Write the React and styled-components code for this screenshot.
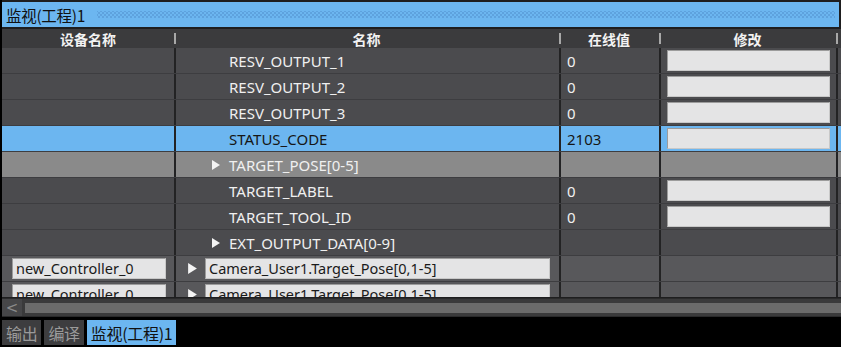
import React from "react";
import styled, { createGlobalStyle } from "styled-components";

const Global = createGlobalStyle`
  html, body { margin: 0; padding: 0; background: #000; }
  body { font-family: "Noto Sans", "Noto Sans CJK SC", sans-serif; }
`;

const Screen = styled.div`
  width: 841px;
  height: 347px;
  background: #000;
  display: flex;
  flex-direction: column;
  overflow: hidden;
`;

const Panel = styled.div`
  margin-left: 2px;
  padding-top: 2px;
  background: #1e1e1f;
  display: flex;
  flex-direction: column;
`;

const TitleBar = styled.div`
  height: 25px;
  margin-right: 2px;
  background: #6cb6f0;
  display: flex;
  align-items: center;
  padding-left: 4px;
  gap: 12px;
`;

const TitleText = styled.span`
  font-family: "Noto Sans CJK SC", sans-serif;
  font-size: 15.5px;
  color: #111;
  letter-spacing: -0.3px;
`;

const Dots = styled.div`
  flex: 1;
  height: 7px;
  margin-right: 4px;
  background-image:
    radial-gradient(circle, #5ea2de 0.8px, transparent 1px),
    radial-gradient(circle, #5ea2de 0.8px, transparent 1px);
  background-size: 4px 4px;
  background-position: 0 0, 2px 2px;
`;

const Gap = styled.div`
  height: 2px;
  background: #1e1e1f;
`;

const columns = "172px 385px 100px 177px 1fr";

const Header = styled.div`
  display: grid;
  grid-template-columns: ${columns};
  height: 19px;
  background: #3b3b3d;
`;

const HeadCell = styled.div`
  position: relative;
  display: flex;
  align-items: center;
  justify-content: center;
  font-family: "Noto Sans CJK SC", sans-serif;
  font-weight: 700;
  font-size: 14px;
  color: #f2f2f2;
  &::before {
    content: "";
    display: ${(p) => (p.$first ? "none" : "block")};
    position: absolute;
    left: 0;
    top: 4px;
    width: 2px;
    height: 11px;
    background: #a8a8a8;
  }
`;

const Body = styled.div`
  height: 249px;
  overflow: hidden;
  display: flex;
  flex-direction: column;
`;

const rowBg = {
  normal: "#4b4b4e",
  selected: "#6cb6f0",
  group: "#8a8a8a",
  light: "#58585b",
};

const Row = styled.div`
  display: grid;
  grid-template-columns: ${columns};
  height: 26px;
  flex-shrink: 0;
  box-sizing: border-box;
  border-bottom: 1px solid #3d3d40;
  background: ${(p) => rowBg[p.$kind]};
  color: ${(p) => (p.$kind === "selected" ? "#161616" : "#f0f0f0")};
`;

const Cell = styled.div`
  display: flex;
  align-items: center;
  box-sizing: border-box;
  border-left: ${(p) => (p.$first ? "none" : "2px solid #232324")};
  padding-left: ${(p) => p.$pl || 0}px;
  padding-right: ${(p) => p.$pr || 0}px;
  font-size: 15px;
  gap: ${(p) => p.$gap || 0}px;
  white-space: nowrap;
  overflow: hidden;
`;

const Field = styled.div`
  flex: 1;
  height: 21px;
  box-sizing: border-box;
  margin-top: -1px;
  background: #e4e4e5;
  border: 1px solid #9c9c9c;
  border-right-color: #c8c8c8;
  border-bottom-color: #c8c8c8;
  color: #1a1a1a;
  font-size: 14.5px;
  display: flex;
  align-items: center;
  padding-left: 3px;
  white-space: nowrap;
  overflow: hidden;
`;

const Arrow = ({ size = 9 }) => (
  <svg width={size - 1} height={size + 1} viewBox="0 0 8 10" style={{ flexShrink: 0 }}>
    <polygon points="0,0 8,5 0,10" fill="#f4f4f4" />
  </svg>
);

const ScrollBar = styled.div`
  height: 17px;
  margin-top: 1px;
  background: #3a3a3b;
  border-top: 1px solid #2a2a2b;
  border-bottom: 1px solid #2a2a2b;
  display: flex;
  align-items: center;
`;

const ScrollBtn = styled.div`
  width: 20px;
  height: 17px;
  background: #464648;
  color: #8a8a8a;
  font-size: 15px;
  display: flex;
  align-items: center;
  justify-content: center;
  font-family: "DejaVu Sans", sans-serif;
`;

const Thumb = styled.div`
  flex: 1;
  height: 10px;
  margin-left: 3px;
  background: #6b6b6b;
`;

const Tabs = styled.div`
  display: flex;
  gap: 3px;
  margin-top: 3px;
  margin-left: 2px;
  height: 25px;
`;

const Tab = styled.div`
  display: flex;
  align-items: center;
  padding: 0 4px;
  font-family: "Noto Sans CJK SC", sans-serif;
  font-size: 16px;
  letter-spacing: -0.3px;
  background: ${(p) => (p.$active ? "#6cb6f0" : "#3d3d3f")};
  color: ${(p) => (p.$active ? "#111" : "#9a9a9a")};
`;

const rows = [
  { name: "RESV_OUTPUT_1", value: "0", edit: true },
  { name: "RESV_OUTPUT_2", value: "0", edit: true },
  { name: "RESV_OUTPUT_3", value: "0", edit: true },
  { name: "STATUS_CODE", value: "2103", edit: true, kind: "selected" },
  { name: "TARGET_POSE[0-5]", group: true, kind: "group" },
  { name: "TARGET_LABEL", value: "0", edit: true },
  { name: "TARGET_TOOL_ID", value: "0", edit: true },
  { name: "EXT_OUTPUT_DATA[0-9]", group: true },
];

export default function App() {
  return (
    <Screen>
      <Global />
      <Panel>
        <TitleBar>
          <TitleText>监视(工程)1</TitleText>
          <Dots />
        </TitleBar>
        <Gap />
        <Header>
          <HeadCell $first>设备名称</HeadCell>
          <HeadCell>名称</HeadCell>
          <HeadCell>在线值</HeadCell>
          <HeadCell>修改</HeadCell>
          <HeadCell />
        </Header>
        <Body>
          {rows.map((r) => (
            <Row key={r.name} $kind={r.kind || "normal"}>
              <Cell $first />
              {r.group ? (
                <Cell $pl={36} $gap={9}>
                  <Arrow />
                  {r.name}
                </Cell>
              ) : (
                <Cell $pl={53}>{r.name}</Cell>
              )}
              <Cell $pl={6}>{r.value}</Cell>
              <Cell $pl={6} $pr={6}>{r.edit && <Field />}</Cell>
              <Cell />
            </Row>
          ))}
          {[0, 1].map((i) => (
            <Row key={"c" + i} $kind="light">
              <Cell $first $pl={10} $pr={8}>
                <Field>new_Controller_0</Field>
              </Cell>
              <Cell $pl={12} $pr={9} $gap={8}>
                <Arrow size={10} />
                <Field>Camera_User1.Target_Pose[0,1-5]</Field>
              </Cell>
              <Cell />
              <Cell />
              <Cell />
            </Row>
          ))}
        </Body>
        <ScrollBar>
          <ScrollBtn>&lt;</ScrollBtn>
          <Thumb />
        </ScrollBar>
      </Panel>
      <Tabs>
        <Tab>输出</Tab>
        <Tab>编译</Tab>
        <Tab $active>监视(工程)1</Tab>
      </Tabs>
    </Screen>
  );
}
